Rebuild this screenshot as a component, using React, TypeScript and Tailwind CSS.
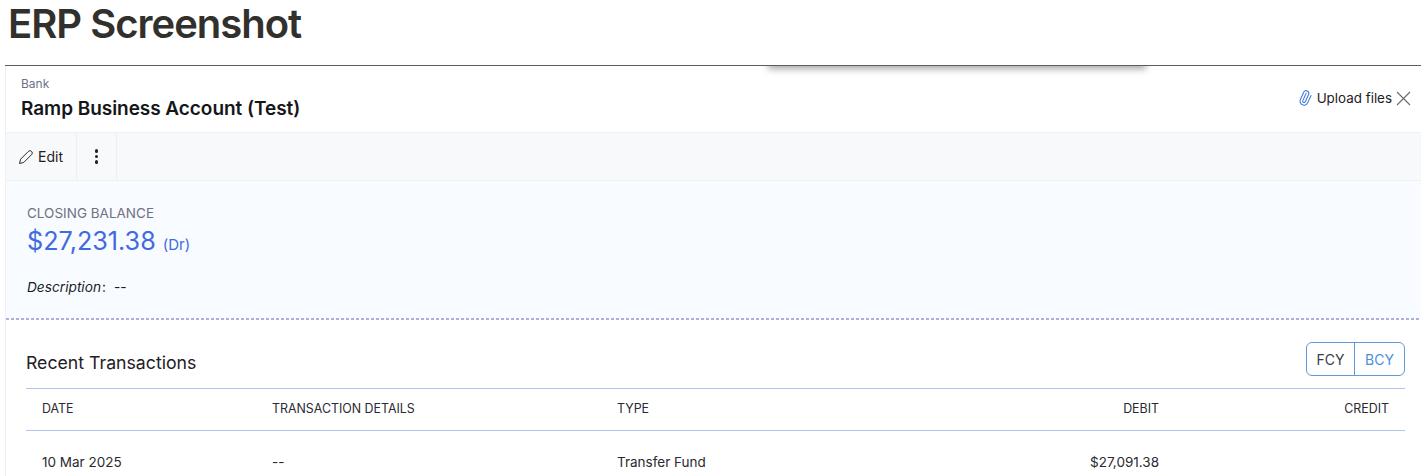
import { Paperclip } from "lucide-react";

const cols = [
  "w-[246px] pl-[16px]",
  "w-[345px]",
  "w-[342px]",
  "w-[200px] text-right",
  "w-[246px] text-right pr-[16px]",
];

export default function App() {
  return (
    <div className="h-[476px] overflow-hidden bg-white font-['Inter',sans-serif] text-[#1f2024]">
      {/* Page title */}
      <h1 className="h-[65px] pl-[8px] text-[40px] leading-[48px] font-semibold tracking-[-1px] text-[#32302c]">
        ERP Screenshot
      </h1>

      <div className="relative ml-[5px] w-[1416px] border-t border-[#5c5b66]">
        <div className="relative border-l border-[#eef0f3]">
          {/* Header */}
          <div className="flex h-[66px] items-start justify-between bg-white pl-[15px] pr-[10px]">
            <div className="pt-[10px]">
              <div className="text-[12px] leading-[16px] text-[#6c718a]">Bank</div>
              <div className="mt-[5px] text-[19px] leading-[24px] font-semibold tracking-[-0.05px] text-[#15161a]">
                Ramp Business Account (Test)
              </div>
            </div>
            <div className="flex items-center pt-[23px]">
              <Paperclip className="h-[16px] w-[16px] -rotate-[20deg] text-[#3f78d8]" strokeWidth={1.6} />
              <span className="ml-[4px] text-[13.4px] leading-[18px]">Upload files</span>
              <svg className="ml-[4px] h-[15px] w-[15px] text-[#6a6b70]" viewBox="0 0 15 15" fill="none" stroke="currentColor" strokeWidth={1.1}>
                <path d="M1 1l13 13M14 1L1 14" />
              </svg>
            </div>
          </div>

          {/* Toolbar */}
          <div className="flex h-[49px] border-y border-[#f0f1f4] bg-[#f8f9fb]">
            <div className="flex w-[71px] items-center border-r border-[#edeef2] pl-[12px]">
              <svg className="h-[16px] w-[16px]" viewBox="0 0 16 16" fill="none" stroke="#2a2b30" strokeWidth={1}>
                <path d="M1.5 14.5L2.6 10.2 10.4 2.4a2.2 2.2 0 0 1 3.2 3.2L5.8 13.4Z" />
              </svg>
              <span className="ml-[4px] text-[14px] leading-[18px]">Edit</span>
            </div>
            <div className="flex w-[40px] flex-col items-center justify-center gap-[2px] border-r border-[#edeef2]">
              <span className="h-[3.5px] w-[3.5px] rounded-full bg-[#222]" />
              <span className="h-[3.5px] w-[3.5px] rounded-full bg-[#222]" />
              <span className="h-[3.5px] w-[3.5px] rounded-full bg-[#222]" />
            </div>
          </div>

          {/* Balance */}
          <div className="h-[137px] bg-[#f8fbff] pl-[21px] pt-[23px]">
            <div className="text-[13.5px] leading-[18px] text-[#70727f]">CLOSING BALANCE</div>
            <div className="mt-[1px] flex items-baseline text-[#3f6ae0]">
              <span className="text-[25.2px] leading-[36px]">$27,231.38</span>
              <span className="ml-[7px] text-[15px] leading-[20px]">(Dr)</span>
            </div>
            <div className="mt-[19px] text-[13.7px] leading-[18px] text-[#1b1b1f]">
              <i>Description</i>
              <span className="ml-[1px]">:</span>
              <span className="ml-[8px]">--</span>
            </div>
          </div>
          <div className="h-[2px] bg-[repeating-linear-gradient(90deg,#a9b1dc_0_3px,transparent_3px_5px)]" />

          {/* Recent transactions */}
          <div className="bg-white pl-[20px]">
            <div className="flex h-[68px] w-[1379px] items-start justify-between pt-[22px]">
              <div className="pt-[9px] text-[17.7px] leading-[24px] text-[#1f2024]">Recent Transactions</div>
              <div className="flex h-[34px] overflow-hidden rounded-[6px] border border-[#5f9bd5] text-[14px]">
                <div className="flex w-[48px] items-center justify-center border-r border-[#5f9bd5] text-[#3d3d42]">FCY</div>
                <div className="flex w-[49px] items-center justify-center text-[#4a90d9]">BCY</div>
              </div>
            </div>

            <div className="w-[1379px]">
              <div className="flex h-[43px] items-center border-y border-[#b4c5ec] text-[12.4px] text-[#2a2b30]">
                <div className={cols[0]}>DATE</div>
                <div className={cols[1]}>TRANSACTION DETAILS</div>
                <div className={cols[2]}>TYPE</div>
                <div className={cols[3]}>DEBIT</div>
                <div className={cols[4]}>CREDIT</div>
              </div>
              <div className="flex h-[62px] items-center text-[13.5px] text-[#2a2b30]">
                <div className={cols[0]}>10 Mar 2025</div>
                <div className={cols[1]}>--</div>
                <div className={cols[2]}>Transfer Fund</div>
                <div className={cols[3]}>$27,091.38</div>
                <div className={cols[4]} />
              </div>
            </div>
          </div>

          {/* Shadow from the cropped window above */}
          <div className="absolute left-[752px] top-0 h-[16px] w-[398px] overflow-hidden">
            <div className="mx-[10px] mt-[-10px] h-[10px] shadow-[0_3px_7px_rgba(0,0,0,0.35)]" />
          </div>
        </div>
      </div>
    </div>
  );
}
